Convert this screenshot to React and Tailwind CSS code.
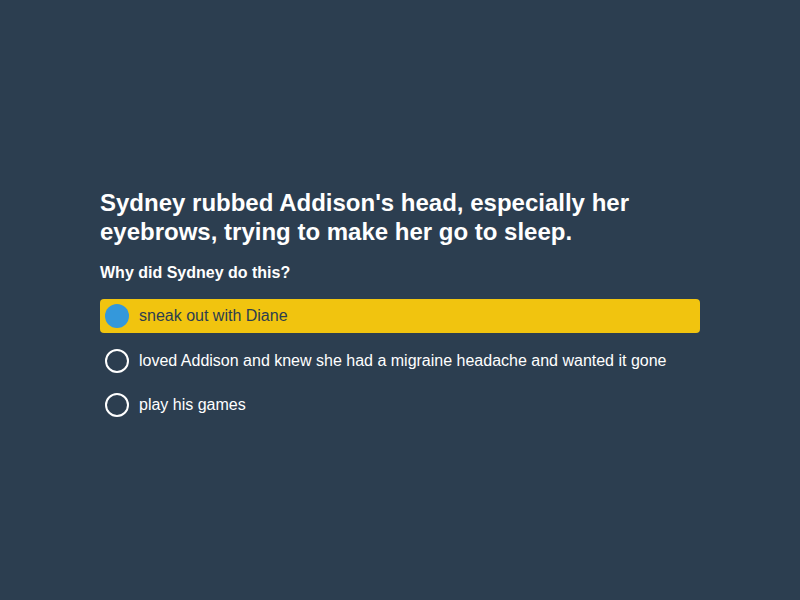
import React from 'react';
import { useState } from 'react';

const options = [
    'sneak out with Diane',
    'loved Addison and knew she had a migraine headache and wanted it gone',
    'play his games',
];

const App = () => {
    const [selected, setSelected] = useState(0);

    return (
        <div className="min-h-screen w-full bg-[#2c3e50] flex items-center justify-center pt-[10px]" style={{ fontFamily: '"Liberation Sans", Arial, sans-serif' }}>
            <div className="w-[600px]">
                <h1 className="text-[24px] leading-[29px] font-bold text-white">
                    Sydney rubbed Addison's head, especially her eyebrows, trying to make her go to sleep.
                </h1>
                <p className="mt-[17px] text-[16px] leading-[19px] font-bold text-white">Why did Sydney do this?</p>
                <ul className="mt-[17px] flex flex-col gap-[10px]">
                    {options.map((opt, index) => {
                        const active = index === selected;
                        return (
                            <li
                                key={index}
                                onClick={() => setSelected(index)}
                                className={active
                                    ? 'flex items-center h-[34.5px] px-[5px] rounded bg-[#f1c40f] text-[#2c3e50] cursor-pointer'
                                    : 'flex items-center h-[34.5px] px-[5px] rounded text-white cursor-pointer'}
                            >
                                {active ? (
                                    <span className="w-6 h-6 rounded-full bg-[#3498db] flex-shrink-0" />
                                ) : (
                                    <span className="w-6 h-6 rounded-full border-2 border-white flex-shrink-0" />
                                )}
                                <span className="ml-[10px] text-[16px] leading-[normal]">{opt}</span>
                            </li>
                        );
                    })}
                </ul>
            </div>
        </div>
    );
};

export default App;
